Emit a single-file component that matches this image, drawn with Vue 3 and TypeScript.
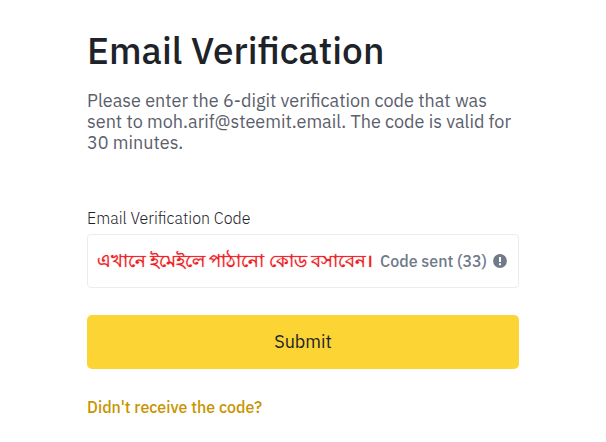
<script setup lang="ts">
import { ref } from 'vue'

const email = 'moh.arif@steemit.email'
const code = ref('এখানে ইমেইলে পাঠানো কোড বসাবেন।')
const secondsLeft = ref(33)
</script>

<template>
  <main class="page">
    <h1 class="title">Email Verification</h1>
    <p class="intro">
      Please enter the 6-digit verification code that was sent to {{ email }}. The code is valid for 30 minutes.
    </p>
    <form class="form" @submit.prevent>
      <label class="label" for="code">Email Verification Code</label>
      <div class="field">
        <input id="code" v-model="code" class="input" type="text" autocomplete="one-time-code" />
        <span class="status">Code sent ({{ secondsLeft }})</span>
        <svg class="icon" viewBox="0 0 14 14" aria-hidden="true">
          <circle cx="7" cy="7" r="6.9" fill="#707a8a" />
          <path d="M6 3h2v5H6zM6 9.2h2v2H6z" fill="#fff" />
        </svg>
      </div>
      <button class="submit" type="submit">Submit</button>
    </form>
    <a class="help" href="#resend">Didn't receive the code?</a>
  </main>
</template>

<style>
body {
  background: #fff;
}
</style>

<style scoped>
.page {
  box-sizing: border-box;
  padding: 28px 87px 24px;
  font-family: "IBM Plex Sans", Roboto, "Noto Sans", sans-serif;
  color: #1e2329;
}

.title {
  margin: 0;
  font-size: 37px;
  line-height: 44px;
  font-weight: 500;
}

.intro {
  margin: 18px 0 0;
  font-size: 18px;
  line-height: 21px;
  font-weight: 400;
  color: #5a606b;
}

.form {
  display: flex;
  flex-direction: column;
  margin-top: 55px;
}

.label {
  font-size: 16px;
  line-height: 20px;
  font-weight: 300;
  color: #1e2329;
}

.field {
  display: flex;
  align-items: center;
  box-sizing: border-box;
  min-height: 54px;
  margin-top: 6px;
  padding: 0 11px 0 9px;
  border: 1px solid #eaecef;
  border-radius: 4px;
}

.input {
  flex: 1;
  min-width: 0;
  padding: 0;
  border: 0;
  outline: 0;
  background: transparent;
  font-family: inherit;
  font-size: 18px;
  line-height: 28px;
  font-weight: 400;
  color: #ed1c24;
  text-shadow: 0 0 1px #ed1c24;
}

.status {
  margin-left: 6px;
  font-size: 16px;
  line-height: 20px;
  font-weight: 500;
  white-space: nowrap;
  color: #707a8a;
}

.icon {
  flex: none;
  width: 14px;
  height: 14px;
  margin-left: 6px;
}

.submit {
  min-height: 54px;
  margin-top: 27px;
  border: 0;
  border-radius: 5px;
  background: #fcd535;
  font-family: inherit;
  font-size: 18px;
  line-height: 24px;
  font-weight: 400;
  color: #1e2329;
  cursor: pointer;
}

.help {
  display: inline-block;
  margin-top: 28px;
  font-size: 16px;
  line-height: 20px;
  font-weight: 500;
  color: #c99400;
  text-decoration: none;
}
</style>
